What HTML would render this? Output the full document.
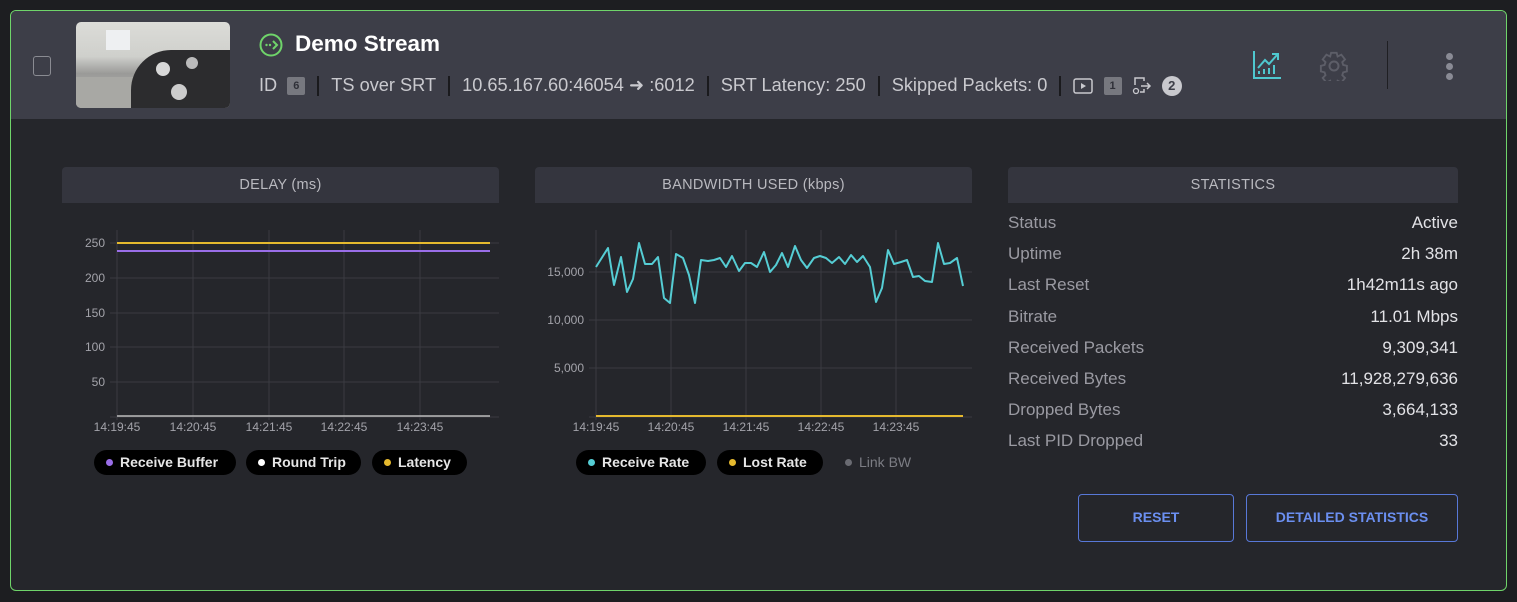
<!DOCTYPE html>
<html><head><meta charset="utf-8"><style>
*{margin:0;padding:0;box-sizing:border-box}
body{width:1517px;height:602px;background:#1d1e21;font-family:"Liberation Sans",sans-serif;position:relative;overflow:hidden}
.card{position:absolute;left:10px;top:10px;width:1497px;height:581px;border:1.5px solid #6fd46a;border-radius:6px;background:#25262b;overflow:hidden}
.hdr{position:absolute;left:0;top:0;width:100%;height:108px;background:#3d3e48}
.a{position:absolute;white-space:nowrap}
.ph{position:absolute;height:36px;background:#34353e;border-radius:4px 4px 0 0;color:#b9b9bf;font-size:14.5px;text-align:center;line-height:36px;letter-spacing:.3px}
.lbl{position:absolute;left:1008px;color:#9a9aa2;font-size:17px}
.val{position:absolute;right:59px;color:#e2e2e6;font-size:17px;text-align:right}
.btn{position:absolute;border:1.5px solid #5878d8;border-radius:4px;color:#6b8ff0;font-weight:bold;font-size:14px;text-align:center;line-height:45px}
.pill{position:absolute;height:25px;background:#000;border-radius:13px;color:#e6e6e6;font-size:14px;font-weight:bold;line-height:25px;padding-left:26px}
.pill i{position:absolute;left:12px;top:9px;width:7px;height:7px;border-radius:50%}
.sep{display:inline-block;width:2px;height:20px;background:#1a1a1d;vertical-align:middle;margin:0 12px}
.bx{display:inline-block;background:#77787f;color:#2f3038;font-size:11px;font-weight:bold;width:18px;height:18px;line-height:18px;text-align:center;border-radius:2px;vertical-align:middle}
</style></head><body>
<div class="card"><div class="hdr"></div></div>
<div class="a" style="left:33px;top:56px;width:18px;height:20px;border:1.5px solid #8a8b92;border-radius:3px"></div>
<div class="a" style="left:76px;top:22px;width:154px;height:86px;border-radius:5px;overflow:hidden;background:linear-gradient(180deg,#dcdcd8 0%,#cfd0cc 40%,#9a9a98 60%,#c0c0bc 100%)">
<div class="a" style="left:30px;top:8px;width:24px;height:20px;background:#eef0f2"></div>
<div class="a" style="left:0;top:55px;width:60px;height:31px;background:#a8a8a4"></div>
<div class="a" style="left:55px;top:28px;width:99px;height:58px;background:#2c2c2e;border-radius:40px 0 0 0"></div>
<div class="a" style="left:80px;top:40px;width:14px;height:14px;border-radius:50%;background:#d8d8d8"></div>
<div class="a" style="left:110px;top:35px;width:12px;height:12px;border-radius:50%;background:#bbb"></div>
<div class="a" style="left:95px;top:62px;width:16px;height:16px;border-radius:50%;background:#ccc"></div>
</div>
<svg class="a" style="left:259px;top:33px" width="24" height="24" viewBox="0 0 24 24"><circle cx="12" cy="12" r="10.5" fill="none" stroke="#6fd46a" stroke-width="2"/><circle cx="7.5" cy="12" r="1.2" fill="#6fd46a"/><circle cx="11" cy="12" r="1.2" fill="#6fd46a"/><path d="M14 8l4 4-4 4" fill="none" stroke="#6fd46a" stroke-width="2"/></svg>
<div class="a" style="left:295px;top:31px;color:#fff;font-size:22.5px;font-weight:bold">Demo Stream</div>
<div class="a" style="left:259px;top:74px;color:#c9c9ce;font-size:18.2px;line-height:22px">ID &nbsp;<span class="bx">6</span><span class="sep"></span>TS over SRT<span class="sep"></span>10.65.167.60:46054 ➜ :6012<span class="sep"></span>SRT Latency: 250<span class="sep"></span>Skipped Packets: 0<span class="sep"></span><svg width="20" height="16" viewBox="0 0 20 16" style="vertical-align:middle"><rect x="1" y="1" width="18" height="14" rx="2" fill="none" stroke="#c9c9ce" stroke-width="1.5"/><path d="M8 5l5 3-5 3z" fill="#c9c9ce"/></svg> &nbsp;<span class="bx">1</span> &nbsp;<svg width="20" height="20" viewBox="0 0 20 20" style="vertical-align:middle"><path d="M3 9V2h9v3M12 13v3H8" fill="none" stroke="#c9c9ce" stroke-width="1.5"/><path d="M9 10h9M15 7l3 3-3 3" fill="none" stroke="#c9c9ce" stroke-width="1.5"/><circle cx="4" cy="15" r="2.5" fill="none" stroke="#c9c9ce" stroke-width="1.3"/></svg> &nbsp;<span style="display:inline-block;width:20px;height:20px;border-radius:50%;background:#c9c9ce;color:#3d3e48;font-size:13px;font-weight:bold;text-align:center;line-height:20px;vertical-align:middle">2</span></div>
<svg class="a" style="left:1252px;top:50px" width="30" height="30" viewBox="0 0 30 30"><path d="M2 1v27h27" fill="none" stroke="#4fc8cf" stroke-width="2"/><path d="M6 18l7-8 4 4 8-9" fill="none" stroke="#4fc8cf" stroke-width="2"/><path d="M20 4h6v6" fill="none" stroke="#4fc8cf" stroke-width="2"/><path d="M7 24v-3M12 24v-5M17 24v-6M22 24v-9" stroke="#4fc8cf" stroke-width="2"/></svg>
<svg class="a" style="left:1319px;top:51px" width="30" height="30" viewBox="0 0 30 30"><path d="M12 2h6l1 4 4-2 4 5-3 3 1 3 4 1v6l-4 1-1 3 3 3-4 5-4-2-1 4h-6l-1-4-4 2-4-5 3-3-1-3-4-1v-6l4-1 1-3-3-3 4-5 4 2z" fill="none" stroke="#5d5e68" stroke-width="2" transform="scale(.93) translate(1 0)"/><circle cx="15" cy="15" r="4.5" fill="none" stroke="#5d5e68" stroke-width="2"/></svg>
<div class="a" style="left:1387px;top:41px;width:1px;height:48px;background:#1f1f23"></div>
<div class="a" style="left:1446px;top:53px;width:7px;height:7px;border-radius:50%;background:#8a8b95"></div>
<div class="a" style="left:1446px;top:63px;width:7px;height:7px;border-radius:50%;background:#8a8b95"></div>
<div class="a" style="left:1446px;top:73px;width:7px;height:7px;border-radius:50%;background:#8a8b95"></div>

<div class="ph" style="left:62px;top:167px;width:437px">DELAY (ms)</div>
<div class="ph" style="left:535px;top:167px;width:437px">BANDWIDTH USED (kbps)</div>
<div class="ph" style="left:1008px;top:167px;width:450px">STATISTICS</div>

<svg class="a" style="left:0;top:0" width="1517" height="602">
<g stroke="#3a3b42" stroke-width="1">
<line x1="110" y1="243" x2="499" y2="243"/><line x1="110" y1="278" x2="499" y2="278"/><line x1="110" y1="313" x2="499" y2="313"/><line x1="110" y1="347" x2="499" y2="347"/><line x1="110" y1="382" x2="499" y2="382"/><line x1="110" y1="417" x2="499" y2="417"/>
<line x1="117" y1="230" x2="117" y2="420"/><line x1="193" y1="230" x2="193" y2="420"/><line x1="269" y1="230" x2="269" y2="420"/><line x1="344" y1="230" x2="344" y2="420"/><line x1="420" y1="230" x2="420" y2="420"/>
<line x1="589" y1="272" x2="972" y2="272"/><line x1="589" y1="320" x2="972" y2="320"/><line x1="589" y1="368" x2="972" y2="368"/><line x1="589" y1="417" x2="972" y2="417"/>
<line x1="596" y1="230" x2="596" y2="420"/><line x1="671" y1="230" x2="671" y2="420"/><line x1="746" y1="230" x2="746" y2="420"/><line x1="821" y1="230" x2="821" y2="420"/><line x1="896" y1="230" x2="896" y2="420"/>
</g>
<line x1="117" y1="243" x2="490" y2="243" stroke="#e5b92e" stroke-width="2"/>
<line x1="117" y1="251" x2="490" y2="251" stroke="#9a6ee8" stroke-width="2"/>
<line x1="117" y1="416" x2="490" y2="416" stroke="#bbb" stroke-width="1.5"/>
<line x1="596" y1="416" x2="963" y2="416" stroke="#e5b92e" stroke-width="2"/>
<polyline fill="none" stroke="#55cdd4" stroke-width="2" stroke-linejoin="round" points="596,267 608,248 614,285 621,257 627,292 633,279 639,243 645,264 652,264 658,257 664,298 670,303 676,254 683,258 689,275 695,303 701,260 708,261 714,260 720,258 726,267 732,256 739,271 745,263 751,263 757,267 764,252 770,272 776,265 782,253 788,267 795,246 801,260 807,268 814,258 820,256 826,258 832,263 839,257 845,264 851,255 857,262 863,256 870,267 876,302 882,288 888,250 894,264 901,262 907,260 913,277 919,276 925,281 932,282 938,243 944,264 950,263 957,258 963,286"/>
<g fill="#a3a3aa" font-family="Liberation Sans,sans-serif" font-size="12" text-anchor="end">
<text x="105" y="247">250</text><text x="105" y="282">200</text><text x="105" y="317">150</text><text x="105" y="351">100</text><text x="105" y="386">50</text>
<text x="584" y="276">15,000</text><text x="584" y="324">10,000</text><text x="584" y="372">5,000</text>
</g>
<g fill="#a3a3aa" font-family="Liberation Sans,sans-serif" font-size="12" text-anchor="middle">
<text x="117" y="431">14:19:45</text><text x="193" y="431">14:20:45</text><text x="269" y="431">14:21:45</text><text x="344" y="431">14:22:45</text><text x="420" y="431">14:23:45</text>
<text x="596" y="431">14:19:45</text><text x="671" y="431">14:20:45</text><text x="746" y="431">14:21:45</text><text x="821" y="431">14:22:45</text><text x="896" y="431">14:23:45</text>
</g>
</svg>

<div class="pill" style="left:94px;top:450px;width:142px"><i style="background:#9a6ee8"></i>Receive Buffer</div>
<div class="pill" style="left:246px;top:450px;width:115px"><i style="background:#fff"></i>Round Trip</div>
<div class="pill" style="left:372px;top:450px;width:95px"><i style="background:#e5b92e"></i>Latency</div>
<div class="pill" style="left:576px;top:450px;width:130px"><i style="background:#55cdd4"></i>Receive Rate</div>
<div class="pill" style="left:717px;top:450px;width:106px"><i style="background:#e5b92e"></i>Lost Rate</div>
<div class="pill" style="left:833px;top:450px;width:100px;background:none;color:#7c7d84;font-weight:normal"><i style="background:#6a6b72"></i>Link BW</div>

<div class="lbl" style="top:213px">Status</div><div class="val" style="top:213px">Active</div>
<div class="lbl" style="top:244px">Uptime</div><div class="val" style="top:244px">2h 38m</div>
<div class="lbl" style="top:275px">Last Reset</div><div class="val" style="top:275px">1h42m11s ago</div>
<div class="lbl" style="top:307px">Bitrate</div><div class="val" style="top:307px">11.01 Mbps</div>
<div class="lbl" style="top:338px">Received Packets</div><div class="val" style="top:338px">9,309,341</div>
<div class="lbl" style="top:369px">Received Bytes</div><div class="val" style="top:369px">11,928,279,636</div>
<div class="lbl" style="top:400px">Dropped Bytes</div><div class="val" style="top:400px">3,664,133</div>
<div class="lbl" style="top:431px">Last PID Dropped</div><div class="val" style="top:431px">33</div>

<div class="btn" style="left:1078px;top:494px;width:156px;height:48px">RESET</div>
<div class="btn" style="left:1246px;top:494px;width:212px;height:48px">DETAILED STATISTICS</div>
</body></html>
